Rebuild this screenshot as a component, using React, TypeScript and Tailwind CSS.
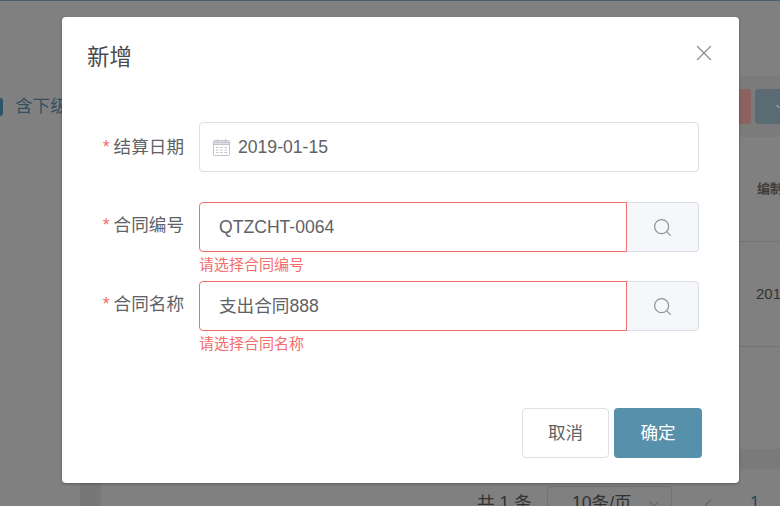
import { ChevronDown, ChevronLeft, Search, X } from "lucide-react";

const font = "font-['Liberation_Sans','Noto_Sans_CJK_SC',sans-serif]";

function DateIcon() {
  return (
    <svg viewBox="0 0 17 17" className="mr-2 h-[17px] w-[17px] shrink-0 text-[#c0c4cc]" fill="none" stroke="currentColor">
      <rect x="0.5" y="1.5" width="16" height="15" rx="1" />
      <path d="M1 5.5h15M4.5 0v3M12.5 0v3" />
      <path d="M1 3.5h15" strokeWidth="2" />
      <path d="M3 8.5h2.5M7.2 8.5h2.5M11.5 8.5H14M3 11h2.5M7.2 11h2.5M11.5 11H14M3 13.5h2.5M7.2 13.5h2.5M11.5 13.5H14" />
    </svg>
  );
}

function Backdrop() {
  return (
    <div className="absolute inset-0 overflow-hidden bg-[#808080]">
      <div className="h-[1px] bg-[#46606e]" />
      <div className="relative mt-[75px] flex h-[61px] items-center">
        <div className="absolute inset-y-0 right-0 left-[80px] bg-[#7b7b7b]" />
        <span className="relative h-[18px] w-[3px] rounded-r-sm bg-[#2d5468]" />
        <span className="relative ml-[12px] text-[17.6px] whitespace-nowrap text-[#34505f]">含下级</span>
        <div className="relative ml-auto flex gap-1">
          <span className="h-[35px] w-3 rounded-r bg-[#8a6260]" />
          <span className="flex h-[35px] w-[25px] items-center justify-end rounded-l bg-[#5b6b74]">
            <span className="h-px w-1 rotate-45 bg-[#a9b4ba]" />
          </span>
        </div>
      </div>
      <div className="ml-auto w-[41px]">
        <div className="flex h-[105px] items-center border-b border-[#747474] pl-[18px]">
          <span className="text-[13px] font-bold whitespace-nowrap text-[#3f3f3f]">编制</span>
        </div>
        <div className="flex h-[105px] items-center border-b border-[#747474] pl-[17px]">
          <span className="text-[15px] text-[#333]">2019</span>
        </div>
      </div>
      <div className="absolute inset-x-0 top-[449px] ml-[80px] h-[20px] bg-[#7a7a7a]" />
      <div className="absolute bottom-0 left-[80px] h-[23px] w-[21px] bg-[#777]" />
      <div className="absolute top-[486px] left-[477px] flex items-center text-[17.6px] text-[#333]">
        <span className="w-[70px] pb-[3px] whitespace-nowrap">共 1 条</span>
        <span className="flex h-[38px] w-[125px] items-center justify-between rounded border border-[#717171] pr-[8px] pb-[3px] pl-[24px] whitespace-nowrap">
          10条/页
          <ChevronDown className="h-[18px] w-[18px] text-[#6a6a6a]" strokeWidth={1.5} />
        </span>
        <ChevronLeft className="ml-[26px] h-[20px] w-[20px] text-[#6a6a6a]" strokeWidth={1.5} />
        <span className="ml-[32px] pb-[3px] text-[#254a5c]">1</span>
      </div>
    </div>
  );
}

function Field({
  label,
  value,
  error,
}: {
  label: string;
  value: string;
  error: string;
}) {
  return (
    <div className="flex">
      <div className="w-[137px] pt-[10px] pr-[15px] text-right text-[17.6px] leading-[26px] whitespace-nowrap text-[#606266]">
        <span className="mr-1 text-[#f56c6c]">*</span>
        {label}
      </div>
      <div className="w-[500px]">
        <div className="flex h-[50px]">
          <div className="flex flex-1 items-center rounded-l border border-[#f56c6c] pl-[19px] text-[17.6px] text-[#606266]">
            {value}
          </div>
          <div className="flex w-[72px] items-center justify-center rounded-r border border-l-0 border-[#dcdfe6] bg-[#f5f7fa] text-[#909399]">
            <Search className="h-[21px] w-[21px]" strokeWidth={1.4} />
          </div>
        </div>
        <div className="h-[29px] text-[15px] leading-[26px] text-[#f56c6c]">{error}</div>
      </div>
    </div>
  );
}

export default function App() {
  return (
    <div className={`relative h-[506px] w-[780px] overflow-hidden ${font}`}>
      <Backdrop />
      <div className="absolute top-[17px] left-[62px] h-[466px] w-[677px] rounded bg-white shadow-[0_1px_3px_rgba(0,0,0,0.3)]">
        <div className="flex items-start justify-between pt-[23px] pr-[22px] pl-[25px]">
          <h2 className="mt-[2px] text-[22.4px] leading-[32px] text-[#4a4a4a]">新增</h2>
          <X className="h-[26px] w-[26px] text-[#909399]" strokeWidth={1.3} />
        </div>
        <div className="mt-[48px]">
          <div className="flex">
            <div className="w-[137px] pt-[12px] pr-[15px] text-right text-[17.6px] leading-[26px] whitespace-nowrap text-[#606266]">
              <span className="mr-1 text-[#f56c6c]">*</span>
              结算日期
            </div>
            <div className="flex h-[50px] w-[500px] items-center rounded border border-[#dcdfe6] pl-[13px] text-[17.6px] text-[#606266]">
              <DateIcon />
              2019-01-15
            </div>
          </div>
          <div className="mt-[30px]">
            <Field label="合同编号" value="QTZCHT-0064" error="请选择合同编号" />
            <Field label="合同名称" value="支出合同888" error="请选择合同名称" />
          </div>
        </div>
        <div className="mt-[48px] flex justify-end gap-[5px] pr-[37px]">
          <button className="h-[50px] w-[87px] rounded border border-[#dcdfe6] bg-white text-[17.6px] text-[#606266]">
            取消
          </button>
          <button className="h-[50px] w-[88px] rounded bg-[#5790ab] text-[17.6px] text-white">确定</button>
        </div>
      </div>
    </div>
  );
}
